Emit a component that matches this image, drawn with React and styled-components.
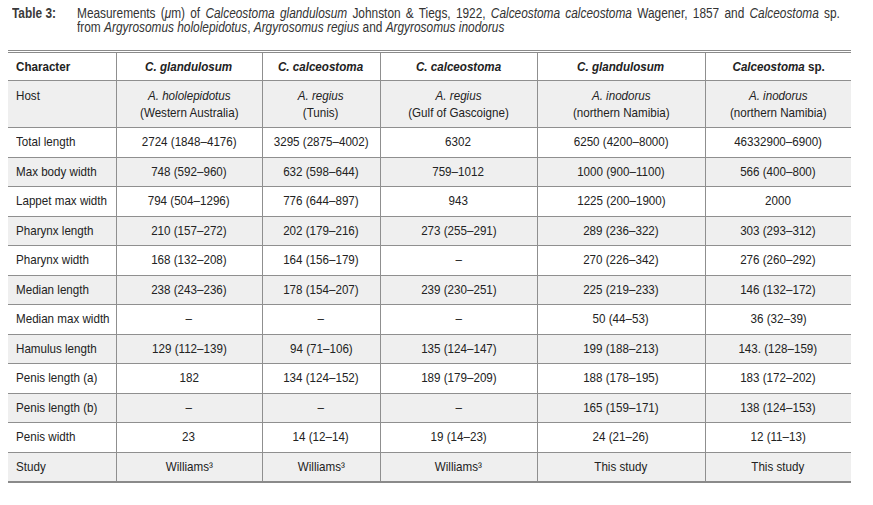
import styled, { createGlobalStyle } from "styled-components"

const GlobalStyle = createGlobalStyle`
  html, body {
    margin: 0;
    padding: 0;
    background: #ffffff;
  }
  body {
    font-family: "Liberation Sans", Arial, sans-serif;
    color: #222222;
  }
`;

const columns = [108, 146, 118, 157, 168, 146];

const rows = [
  ["Total length", "2724 (1848–4176)", "3295 (2875–4002)", "6302", "6250 (4200–8000)", "46332900–6900)"],
  ["Max body width", "748 (592–960)", "632 (598–644)", "759–1012", "1000 (900–1100)", "566 (400–800)"],
  ["Lappet max width", "794 (504–1296)", "776 (644–897)", "943", "1225 (200–1900)", "2000"],
  ["Pharynx length", "210 (157–272)", "202 (179–216)", "273 (255–291)", "289 (236–322)", "303 (293–312)"],
  ["Pharynx width", "168 (132–208)", "164 (156–179)", "–", "270 (226–342)", "276 (260–292)"],
  ["Median length", "238 (243–236)", "178 (154–207)", "239 (230–251)", "225 (219–233)", "146 (132–172)"],
  ["Median max width", "–", "–", "–", "50 (44–53)", "36 (32–39)"],
  ["Hamulus length", "129 (112–139)", "94 (71–106)", "135 (124–147)", "199 (188–213)", "143. (128–159)"],
  ["Penis length (a)", "182", "134 (124–152)", "189 (179–209)", "188 (178–195)", "183 (172–202)"],
  ["Penis length (b)", "–", "–", "–", "165 (159–171)", "138 (124–153)"],
  ["Penis width", "23", "14 (12–14)", "19 (14–23)", "24 (21–26)", "12 (11–13)"],
  ["Study", "Williams³", "Williams³", "Williams³", "This study", "This study"],
];

const hosts = [
  ["A. hololepidotus", "(Western Australia)"],
  ["A. regius", "(Tunis)"],
  ["A. regius", "(Gulf of Gascoigne)"],
  ["A. inodorus", "(northern Namibia)"],
  ["A. inodorus", "(northern Namibia)"],
];

export default function App() {
  return (
    <Page>
      <GlobalStyle />
      <Caption>
        <Label>
          <Fit $left>Table 3:</Fit>
        </Label>
        <CaptionText>
          <Squeeze>
            <CaptionLine $justify>
              Measurements (<i>μ</i>m) of <i>Calceostoma glandulosum</i> Johnston &amp; Tiegs, 1922, <i>Calceostoma calceostoma</i> Wagener, 1857 and <i>Calceostoma</i> sp.
            </CaptionLine>
            <CaptionLine>
              from <i>Argyrosomus hololepidotus</i>, <i>Argyrosomus regius</i> and <i>Argyrosomus inodorus</i>
            </CaptionLine>
          </Squeeze>
        </CaptionText>
      </Caption>

      <Table>
        <colgroup>
          {columns.map((w, i) => (
            <col key={i} style={{ width: w }} />
          ))}
        </colgroup>
        <thead>
          <HeadRow>
            <HeadCell $left><Fit $left>Character</Fit></HeadCell>
            <HeadCell><Fit><i>C. glandulosum</i></Fit></HeadCell>
            <HeadCell><Fit><i>C. calceostoma</i></Fit></HeadCell>
            <HeadCell><Fit><i>C. calceostoma</i></Fit></HeadCell>
            <HeadCell><Fit><i>C. glandulosum</i></Fit></HeadCell>
            <HeadCell><Fit><i>Calceostoma</i> sp.</Fit></HeadCell>
          </HeadRow>
        </thead>
        <tbody>
          <HostRow $shaded>
            <HostCell $left><Fit $left>Host</Fit></HostCell>
            {hosts.map(([fish, place], i) => (
              <HostCell key={i}>
                <Fit>
                  <i>{fish}</i>
                  <br />
                  {place}
                </Fit>
              </HostCell>
            ))}
          </HostRow>
          {rows.map((row, r) => (
            <Row key={r} $shaded={r % 2 === 1}>
              {row.map((value, c) => (
                <Cell key={c} $left={c === 0}>
                  <Fit $left={c === 0}>{value}</Fit>
                </Cell>
              ))}
            </Row>
          ))}
        </tbody>
      </Table>
    </Page>
  )
}

const Page = styled.div`
  width: 873px;
  height: 505px;
  padding: 7px 0 0 8px;
  box-sizing: border-box;
  overflow: hidden;
`;

// the print face is a narrow grotesque: squeeze the Arial-width font to match
const Fit = styled.span`
  display: inline-block;
  white-space: nowrap;
  transform: scaleX(0.86);
  transform-origin: ${(p) => (p.$left ? "left" : "center")} center;
`;

const Caption = styled.div`
  display: flex;
  font-size: 13.8px;
  line-height: 14px;
  color: #333333;
  margin-bottom: 15px;
`;

const Label = styled.div`
  width: 69px;
  padding-left: 4px;
  box-sizing: border-box;
  font-weight: bold;
  color: #3a3a3a;
`;

const CaptionText = styled.div`
  width: 763px;
`;

const Squeeze = styled.div`
  width: 887px;
  transform: scaleX(0.86);
  transform-origin: left top;
`;

const CaptionLine = styled.div`
  text-align: ${(p) => (p.$justify ? "justify" : "left")};
  text-align-last: ${(p) => (p.$justify ? "justify" : "left")};
  white-space: nowrap;
`;

const Table = styled.table`
  width: 843px;
  border-collapse: collapse;
  table-layout: fixed;
  border-top: 3px double #8a8a8a;
  border-bottom: 2px solid #8a8a8a;
  font-size: 13.5px;
  color: #222222;
`;

const HeadRow = styled.tr`
  height: 29px;
`;

const HeadCell = styled.th`
  font-weight: bold;
  text-align: ${(p) => (p.$left ? "left" : "center")};
  padding: 0 0 0 ${(p) => (p.$left ? "8px" : "0")};
  line-height: 16px;
  border: 1px solid #8f8f8f;
  border-top: none;
  &:first-child {
    border-left: none;
  }
  &:last-child {
    border-right: none;
  }
`;

const Row = styled.tr`
  height: 29.5px;
  background: ${(p) => (p.$shaded ? "#efefef" : "#ffffff")};
`;

const HostRow = styled(Row)`
  height: 47px;
`;

const Cell = styled.td`
  text-align: ${(p) => (p.$left ? "left" : "center")};
  vertical-align: middle;
  padding: 0 0 0 ${(p) => (p.$left ? "8px" : "0")};
  line-height: 16px;
  border: 1px solid #8f8f8f;
  &:first-child {
    border-left: none;
  }
  &:last-child {
    border-right: none;
  }
`;

const HostCell = styled(Cell)`
  vertical-align: top;
  padding-top: 6px;
  line-height: 17px;
`;
